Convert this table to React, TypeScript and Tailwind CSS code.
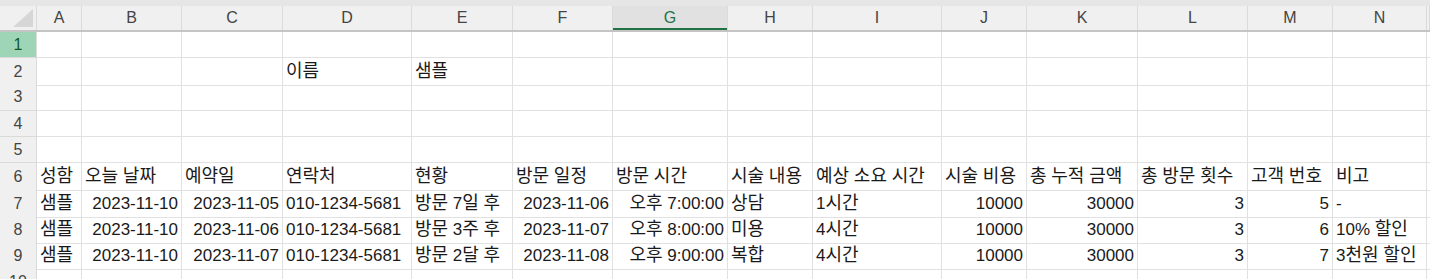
import React from "react";

const font = { fontFamily: '"Liberation Sans", "Noto Sans CJK KR", sans-serif' };

const cols = ["A", "B", "C", "D", "E", "F", "G", "H", "I", "J", "K", "L", "M", "N", ""];

type Val = string | { v: string; r: true };
const R = (v: string): Val => ({ v, r: true });

const headers = [
  "성함", "오늘 날짜", "예약일", "연락처", "현황", "방문 일정", "방문 시간",
  "시술 내용", "예상 소요 시간", "시술 비용", "총 누적 금액", "총 방문 횟수", "고객 번호", "비고",
];

const data: Val[][] = [
  ["샘플", R("2023-11-10"), R("2023-11-05"), "010-1234-5681", "방문 7일 후", R("2023-11-06"), R("오후 7:00:00"), "상담", "1시간", R("10000"), R("30000"), R("3"), R("5"), "-"],
  ["샘플", R("2023-11-10"), R("2023-11-06"), "010-1234-5681", "방문 3주 후", R("2023-11-07"), R("오후 8:00:00"), "미용", "4시간", R("10000"), R("30000"), R("3"), R("6"), "10% 할인"],
  ["샘플", R("2023-11-10"), R("2023-11-07"), "010-1234-5681", "방문 2달 후", R("2023-11-08"), R("오후 9:00:00"), "복합", "4시간", R("10000"), R("30000"), R("3"), R("7"), "3천원 할인"],
];

const empty = (): Val[] => Array(14).fill("");

const rows: Val[][] = [
  empty(),
  ["", "", "", "이름", "샘플", "", "", "", "", "", "", "", "", ""],
  empty(),
  empty(),
  empty(),
  headers,
  ...data,
  empty(),
];

const heights = ["h-[26px]", "h-[26px]", "h-[27px]", "h-[26px]", "h-[26px]", "h-[27px]", "h-[26px]", "h-[26px]", "h-[27px]", "h-[26px]"];

const grid =
  "grid grid-cols-[37px_45px_100px_101px_129px_101px_100px_115px_85px_129px_85px_111px_110px_85px_94px_1fr]";

// hangul in the screenshot font runs a bit wider than Noto CJK, so bump it
function Runs({ text }: { text: string }) {
  return (
    <>
      {text.split(/([가-힣]+)/).map((part, i) =>
        /[가-힣]/.test(part) ? (
          <span key={i} className="text-[18px]">
            {part}
          </span>
        ) : (
          part
        )
      )}
    </>
  );
}

function Cell({ val }: { val: Val }) {
  const right = typeof val !== "string";
  const text = typeof val === "string" ? val : val.v;
  return (
    <div
      className={`flex items-center border-r border-b border-[#e1e1e1] px-[3px] whitespace-pre text-[17px] text-[#1a1a1a] ${
        right ? "justify-end" : "justify-start"
      }`}
    >
      <span>
        <Runs text={text} />
      </span>
    </div>
  );
}

export default function App() {
  return (
    <div className="h-[279px] w-[1430px] overflow-hidden bg-white" style={font}>
      <div className="h-[6px] bg-[#e6e6e6]" />
      <div className={`${grid} h-[26px] border-b-2 border-[#c4c4c4] bg-[#f0f0f0]`}>
        <div className="relative border-r border-[#dadada]">
          <svg className="absolute right-[3px] bottom-[3px]" width="20" height="18" viewBox="0 0 20 18">
            <polygon points="20,0 20,18 0,18" fill="#d6d6d6" />
          </svg>
        </div>
        {cols.map((c, i) =>
          c === "G" ? (
            <div
              key={i}
              className="flex items-center justify-center border-r border-[#dadada] bg-[#e1e1e1] text-[16px] text-[#217346] shadow-[inset_0_-2px_0_#217346]"
            >
              {c}
            </div>
          ) : (
            <div
              key={i}
              className="flex items-center justify-center border-r border-[#dadada] text-[16px] text-[#444]"
            >
              {c}
            </div>
          )
        )}
      </div>
      {rows.map((row, ri) => (
        <div key={ri} className={`${grid} ${heights[ri]}`}>
          <div
            className={`flex items-center justify-center border-r border-b border-[#dadada] text-[16px] ${
              ri === 0 ? "bg-[#9fd5b7] text-[#0f5a2e]" : "bg-[#f0f0f0] text-[#444]"
            }`}
          >
            {ri + 1}
          </div>
          {row.map((v, ci) => (
            <Cell key={ci} val={v} />
          ))}
          <div className="border-b border-[#e1e1e1]" />
        </div>
      ))}
    </div>
  );
}
